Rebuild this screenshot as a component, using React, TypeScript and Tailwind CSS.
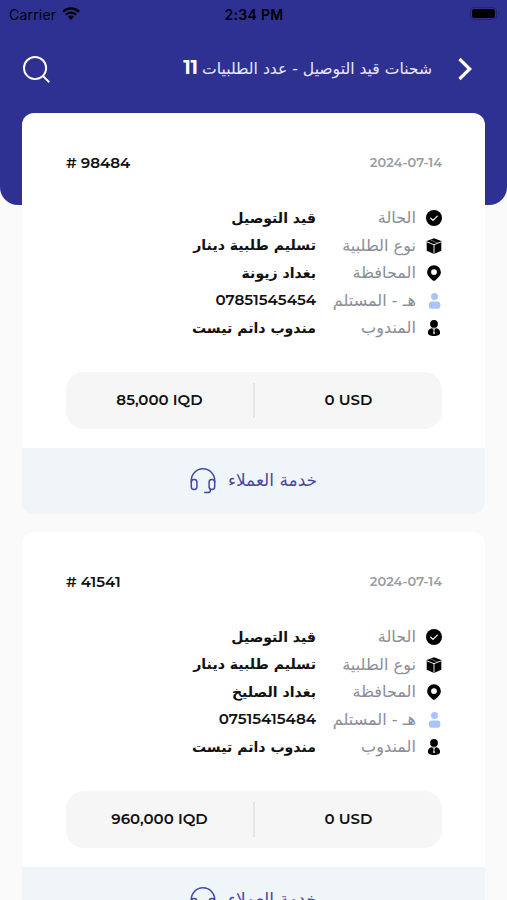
import type { ReactNode } from 'react';

type Shipment = {
  id: string;
  date: string;
  city: string;
  phone: string;
  iqd: string;
};

const SHIPMENTS: Shipment[] = [
  { id: '98484', date: '2024-07-14', city: 'بغداد زيونة', phone: '07851545454', iqd: '85,000' },
  { id: '41541', date: '2024-07-14', city: 'بغداد الصليخ', phone: '07515415484', iqd: '960,000' },
];

function StatusIcon() {
  return (
    <svg viewBox="0 0 16 16" className="size-4">
      <circle cx="8" cy="8" r="8" fill="#000" />
      <path d="M4.7 8.2 7 10.4l4.3-4.3" fill="none" stroke="#fff" strokeWidth="1.2" strokeLinecap="round" strokeLinejoin="round" />
    </svg>
  );
}

function BoxIcon() {
  return (
    <svg viewBox="0 0 16 16" className="size-4">
      <path d="M8 .3 15.3 3v9.8L8 15.9.7 12.8V3z" fill="#000" />
      <path d="M1 3.9 8 6.7l7-2.8M8 6.7v9" fill="none" stroke="#fff" strokeWidth=".9" />
      <path d="m4.3 1.9 7.2 3" fill="none" stroke="#fff" strokeWidth=".4" />
    </svg>
  );
}

function PinIcon() {
  return (
    <svg viewBox="0 0 16 16" className="size-4">
      <path
        d="M8 .2A6.9 6.9 0 0 0 1.1 7c0 3.5 2.9 5.900 5.400 8.200.9.8 2.100.8 3 0 2.500-2.300 5.400-4.700 5.400-8.200A6.900 6.900 0 0 0 8 .2zm0 4a2.900 2.900 0 1 1 0 5.800 2.900 2.900 0 0 1 0-5.800z"
        fill="#000"
        fillRule="evenodd"
      />
    </svg>
  );
}

function ReceiverIcon() {
  return (
    <svg viewBox="0 0 16 16" className="size-4" fill="#a9c3fb">
      <circle cx="8.5" cy="3.6" r="3.5" />
      <rect x="2.8" y="8.6" width="11.6" height="7.2" rx="3.4" />
    </svg>
  );
}

function AgentIcon() {
  return (
    <svg viewBox="0 0 16 16" className="size-4">
      <circle cx="8" cy="3.9" r="3.9" fill="#000" />
      <path d="M5.3 8.3h5.4c2.2.6 3.4 2.3 3.4 4.4 0 2.2-2.7 3.300-6.100 3.300s-6.100-1.100-6.100-3.300c0-2.100 1.200-3.800 3.400-4.400z" fill="#000" />
      <path d="M5.3 8.4 8 9.7l2.7-1.3M7.300 9.600h1.400l-.4 1.500.6 2.200-.9 1.100-.9-1.100.6-2.200z" fill="#fff" />
    </svg>
  );
}

function HeadsetIcon() {
  return (
    <svg viewBox="0 0 26 26" className="size-[26px]" fill="none" stroke="#4845a0" strokeWidth="1.5" strokeLinecap="round" strokeLinejoin="round">
      <path d="M1.3 14.2v-1.7a11.7 11.7 0 0 1 23.4 0v1.700" />
      <rect x="1.3" y="11.6" width="5.6" height="9.8" rx="2.6" />
      <rect x="19.1" y="11.6" width="5.6" height="9.8" rx="2.6" />
      <path d="M20.4 21v1.200c0 1.500-1 2.400-2.500 2.400h-3.200" />
    </svg>
  );
}

function StatusBar() {
  return (
    <div dir="ltr" className="grid h-7 grid-cols-3 items-center pl-[9px] pr-[8px] font-['Inter'] text-black">
      <div className="flex items-center gap-[6px]">
        <span className="text-[14px] tracking-[0.2px]">Carrier</span>
        <svg viewBox="0 0 18 13" className="mb-[2px] h-[13px] w-[18px]">
          <path d="M1 4.7c4.5-4.4 11.5-4.4 16 0M3.9 7.7c2.900-2.800 7.300-2.800 10.200 0" fill="none" stroke="#000" strokeWidth="2.3" />
          <path d="m5.9 9.8 3.1 3.1 3.1-3.1c-1.700-1.600-4.500-1.600-6.200 0z" />
        </svg>
      </div>
      <span className="text-center text-[14px] font-semibold tracking-[0.3px]">2:34 PM</span>
      <div className="mb-[2px] flex items-center justify-end gap-px">
        <div className="h-[13px] w-[27px] rounded-[4px] border border-[#24256c] p-px">
          <div className="h-full rounded-[2.5px] bg-black" />
        </div>
        <div className="h-1 w-px rounded-r bg-[#24256c]" />
      </div>
    </div>
  );
}

function Row({ icon, label, children }: { icon: ReactNode; label: string; children: ReactNode }) {
  return (
    <div className="flex h-[27.5px] items-center">
      {icon}
      <span className="mr-[10px] w-[100px] whitespace-nowrap text-[16.1px] leading-none text-[#8b8e96]">{label}</span>
      <span className="whitespace-nowrap text-[14.1px] font-bold text-[#111]">{children}</span>
    </div>
  );
}

function ShipmentCard({ shipment }: { shipment: Shipment }) {
  return (
    <article className="h-[401px] shrink-0 overflow-hidden rounded-xl bg-white">
      <div className="flex h-[334.5px] flex-col pl-[44px] pr-[43px] pt-[38px]">
        <div className="flex h-6 items-center justify-between font-['Montserrat','Inter']">
          <time className="text-[13px] font-semibold text-[#9b9da3]">{shipment.date}</time>
          <span dir="ltr" className="text-[15px] font-semibold text-[#111]"># {shipment.id}</span>
        </div>
        <div className="mt-[29.5px]">
          <Row icon={<StatusIcon />} label="الحالة">قيد التوصيل</Row>
          <Row icon={<BoxIcon />} label="نوع الطلبية">تسليم طلبية دينار</Row>
          <Row icon={<PinIcon />} label="المحافظة">{shipment.city}</Row>
          <Row icon={<ReceiverIcon />} label="هـ - المستلم">
            <span className="font-['Montserrat','Inter'] text-[15.1px] font-semibold">{shipment.phone}</span>
          </Row>
          <Row icon={<AgentIcon />} label="المندوب">مندوب داتم تيست</Row>
        </div>
        <div dir="ltr" className="mt-[30px] flex h-[57px] shrink-0 items-center rounded-[18px] bg-[#f6f6f6] font-['Montserrat','Inter'] text-[15px] font-semibold text-[#111]">
          <span className="flex-1 text-center">{shipment.iqd} IQD</span>
          <div className="h-[35px] w-[2px] bg-[#e3e5e6]" />
          <span className="flex-1 text-center">0 USD</span>
        </div>
      </div>
      <div className="flex h-[66.5px] items-center justify-center gap-[12px] bg-[#eff5f9] text-[17px] leading-none text-[#4845a0]">
        <span>خدمة العملاء</span>
        <HeadsetIcon />
      </div>
    </article>
  );
}

export default function App() {
  return (
    <main dir="rtl" className="h-[900px] w-[507px] overflow-hidden bg-[#fafafa] font-['DejaVu_Sans',sans-serif]">
      <header className="h-[205px] rounded-b-[18px] bg-[#2e3192]">
        <StatusBar />
        <div className="flex h-[82px] items-center pl-[23px] pr-[35px] text-white">
          <svg viewBox="0 0 14 24" className="h-6 w-[14px]" fill="none" stroke="currentColor" strokeWidth="3.2">
            <path d="m1.5 2 10.2 10L1.5 22" />
          </svg>
          <h1 className="mb-[2px] mr-[26px] flex items-baseline gap-1 whitespace-nowrap text-[15.6px] leading-none text-[#e9e9fa]">
            <span>شحنات قيد التوصيل - عدد الطلبيات</span>
            <span className="font-['Montserrat','Inter'] text-[19px] font-bold text-white">11</span>
          </h1>
          <svg viewBox="0 0 28 28" className="mr-auto size-[27px]" fill="none" stroke="currentColor" strokeWidth="2">
            <circle cx="12.5" cy="12.5" r="11.500" />
            <path d="m20.6 20.6 6.600 6.600" />
          </svg>
        </div>
      </header>
      <section className="relative -mt-[92px] flex flex-col gap-[18px] px-[22px]">
        {SHIPMENTS.map((shipment) => (
          <ShipmentCard key={shipment.id} shipment={shipment} />
        ))}
      </section>
    </main>
  );
}
